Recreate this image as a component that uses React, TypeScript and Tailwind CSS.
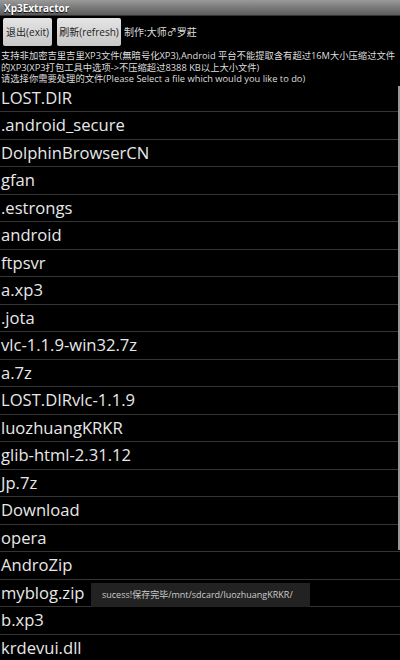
import React from 'react';

const files = [
  'LOST.DIR',
  '.android_secure',
  'DolphinBrowserCN',
  'gfan',
  '.estrongs',
  'android',
  'ftpsvr',
  'a.xp3',
  '.jota',
  'vlc-1.1.9-win32.7z',
  'a.7z',
  'LOST.DIRvlc-1.1.9',
  'luozhuangKRKR',
  'glib-html-2.31.12',
  'Jp.7z',
  'Download',
  'opera',
  'AndroZip',
  'myblog.zip',
  'b.xp3',
  'krdevui.dll',
];

const font = { fontFamily: '"Open Sans", "Noto Sans CJK SC", sans-serif' };

export default function App() {
  return (
    <div className="relative w-[400px] h-[660px] overflow-hidden bg-black text-white" style={font}>
      {/* title bar */}
      <div className="h-[16px] bg-gradient-to-b from-[#9a9a9a] to-[#5c5c5c] flex items-center pl-[4px] border-b border-[#333]">
        <span className="text-[10px] font-bold text-white leading-none [text-shadow:0_1px_1px_#000]">Xp3Extractor</span>
      </div>

      {/* buttons */}
      <div className="flex items-center h-[30px] mt-[1px] pl-[3px]">
        <button className="h-[28px] w-[49px] bg-gradient-to-b from-[#e4e4e4] to-[#c8c8c8] text-[#222] text-[10px] rounded-[2px] whitespace-nowrap">
          退出(exit)
        </button>
        <button className="h-[28px] w-[64px] ml-[5px] bg-gradient-to-b from-[#e4e4e4] to-[#c8c8c8] text-[#222] text-[10px] rounded-[2px] whitespace-nowrap">
          刷新(refresh)
        </button>
        <span className="ml-[3px] text-[10px] text-[#ddd]">制作:大师♂罗莊</span>
      </div>

      {/* description */}
      <div className="mt-[3px] text-[9.3px] leading-[11.5px] text-[#ddd] whitespace-nowrap pl-[1px]">
        <div>支持非加密吉里吉里XP3文件(無暗号化XP3),Android 平台不能提取含有超过16M大小压缩过文件</div>
        <div>的XP3(XP3打包工具中选项-&gt;不压缩超过8388 KB以上大小文件)</div>
        <div>请选择你需要处理的文件(Please Select a file which would you like to do)</div>
      </div>

      {/* file list */}
      <div className="absolute left-0 top-[85px] w-[400px]">
        {files.map((f, i) => (
          <div
            key={f}
            className={`${i % 2 === 0 ? 'h-[27px]' : 'h-[28px]'} border-b border-[#353535] flex items-center pl-[1px] text-[16.6px] text-[#e8e8e8] leading-none`}
          >
            {f}
          </div>
        ))}
      </div>

      {/* scrollbar */}
      <div className="absolute right-0 top-[86px] w-[2px] h-[464px] bg-[#999]" />

      {/* toast */}
      <div className="absolute left-[91px] top-[583px] w-[219px] h-[24px] bg-[#222] flex items-center pl-[11px] text-[9px] text-[#ccc] whitespace-nowrap">
        sucess!保存完毕/mnt/sdcard/luozhuangKRKR/
      </div>
    </div>
  );
}
